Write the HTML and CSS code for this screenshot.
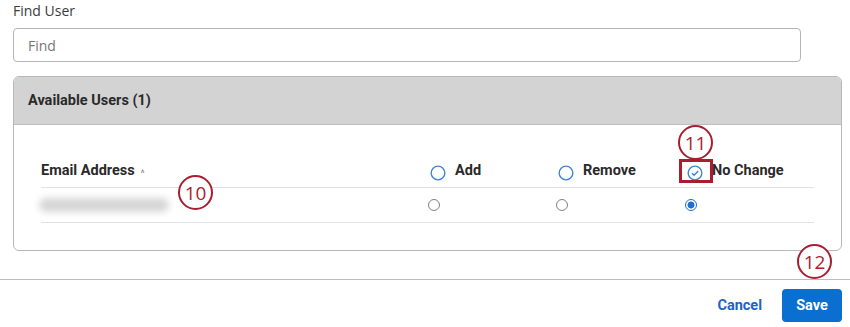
FILE: index.html
```html
<!DOCTYPE html>
<html>
<head>
<meta charset="utf-8">
<link rel="stylesheet" href="styles.css">
</head>
<body>
<div class="page">
  <div class="label">Find User</div>
  <div class="input"><span class="placeholder">Find</span></div>
  <div class="panel">
    <div class="panel-head">Available Users (1)</div>
    <div class="panel-body">
      <div class="grid">
        <div class="th th-email">Email Address <span class="caret">&#94;</span></div>
        <div class="th"><svg class="hicon" viewBox="0 0 14 14"><circle cx="7" cy="7" r="6" /></svg>Add</div>
        <div class="th"><svg class="hicon" viewBox="0 0 14 14"><circle cx="7" cy="7" r="6" /></svg>Remove</div>
        <div class="th"><svg class="hicon" viewBox="0 0 14 14"><circle cx="7" cy="7" r="6" /><path d="M4.3 7.2 L6.2 9 L9.8 5.2" /></svg>No Change</div>
        <div class="td"><div class="blur"></div></div>
        <div class="td"><span class="radio"></span></div>
        <div class="td"><span class="radio"></span></div>
        <div class="td"><span class="radio checked"></span></div>
      </div>
    </div>
  </div>
  <div class="footer">
    <button class="btn-cancel">Cancel</button>
    <button class="btn-save">Save</button>
  </div>
  <div class="anno a10">10</div>
  <div class="anno a11">11</div>
  <div class="anno a12">12</div>
  <div class="hl"></div>
</div>
</body>
</html>
```

FILE: styles.css
```css
* { box-sizing: border-box; }
html, body { margin: 0; padding: 0; background: #fff; }
body { font-family: "Open Sans", "Noto Sans", sans-serif; color: #333; width: 850px; height: 327px; overflow: hidden; }
.page { position: relative; padding: 1px 8px 0 13px; }
.label { font-size: 14px; line-height: 20px; color: #3b3b3b; }
.input { margin-top: 7px; width: 788px; height: 34px; border: 1px solid #b5b5b5; border-radius: 4px; padding-left: 14px; display: flex; align-items: center; }
.placeholder { font-size: 14px; color: #777; }
.panel { margin-top: 14px; width: 829px; border: 1px solid #b8b8b8; border-radius: 6px; overflow: hidden; }
.panel-head { height: 48px; background: #d3d3d3; border-bottom: 1px solid #bdbdbd; padding-left: 14px; display: flex; align-items: center; font-family: Roboto, sans-serif; font-weight: 700; font-size: 14.5px; color: #2a2a2a; }
.panel-body { padding: 29px 27px 27px 27px; }
.grid { display: grid; grid-template-columns: 388px 128px 129px 128px; }
.th { height: 34px; border-bottom: 1px solid #e2e2e2; display: flex; align-items: center; font-family: Roboto, sans-serif; font-weight: 700; font-size: 14.5px; color: #2a2a2a; }
.caret { font-weight: 400; font-size: 9px; color: #777; margin-left: 6px; position: relative; top: 2px; }
.hicon { width: 16px; height: 16px; margin-left: 1px; margin-right: 9px; fill: none; stroke: #3b86d4; stroke-width: 1.2; position: relative; top: 2px; }
.td { height: 35px; border-bottom: 1px solid #e2e2e2; display: flex; align-items: center; }
.blur { width: 130px; height: 14px; margin-left: -2px; background: #d6d6d6; border-radius: 7px; filter: blur(3.5px); }
.radio { width: 12px; height: 12px; border: 1px solid #808080; border-radius: 50%; margin-left: -1px; display: inline-block; }
.radio.checked { border-color: #1a6fcf; background: radial-gradient(circle, #1a6fcf 0 3.2px, #fff 3.8px); }
.footer { margin: 28px -8px 0 -13px; border-top: 1px solid #bdbdbd; height: 49px; display: flex; justify-content: flex-end; align-items: flex-start; padding: 9px 8px 0 0; }
.btn-cancel { background: none; border: 0; font-family: Roboto, sans-serif; font-weight: 700; font-size: 14.5px; color: #1a66c2; padding: 0; margin-right: 20px; height: 33px; cursor: pointer; }
.btn-save { background: #0b6fd1; border: 0; border-radius: 4px; font-family: Roboto, sans-serif; font-weight: 700; font-size: 14.5px; color: #fff; width: 60px; height: 33px; padding: 0; }
.anno { position: absolute; width: 35px; height: 35px; border: 2.5px solid #a81e2f; border-radius: 50%; color: #a81e2f; font-size: 19px; display: flex; align-items: center; justify-content: center; font-family: "Open Sans", sans-serif; background: #fff; }
.a10 { left: 178px; top: 175px; }
.a11 { left: 678px; top: 125px; }
.a12 { left: 797px; top: 244px; }
.hl { position: absolute; left: 679px; top: 159px; width: 34px; height: 24px; border: 3px solid #a81e2f; }
```
